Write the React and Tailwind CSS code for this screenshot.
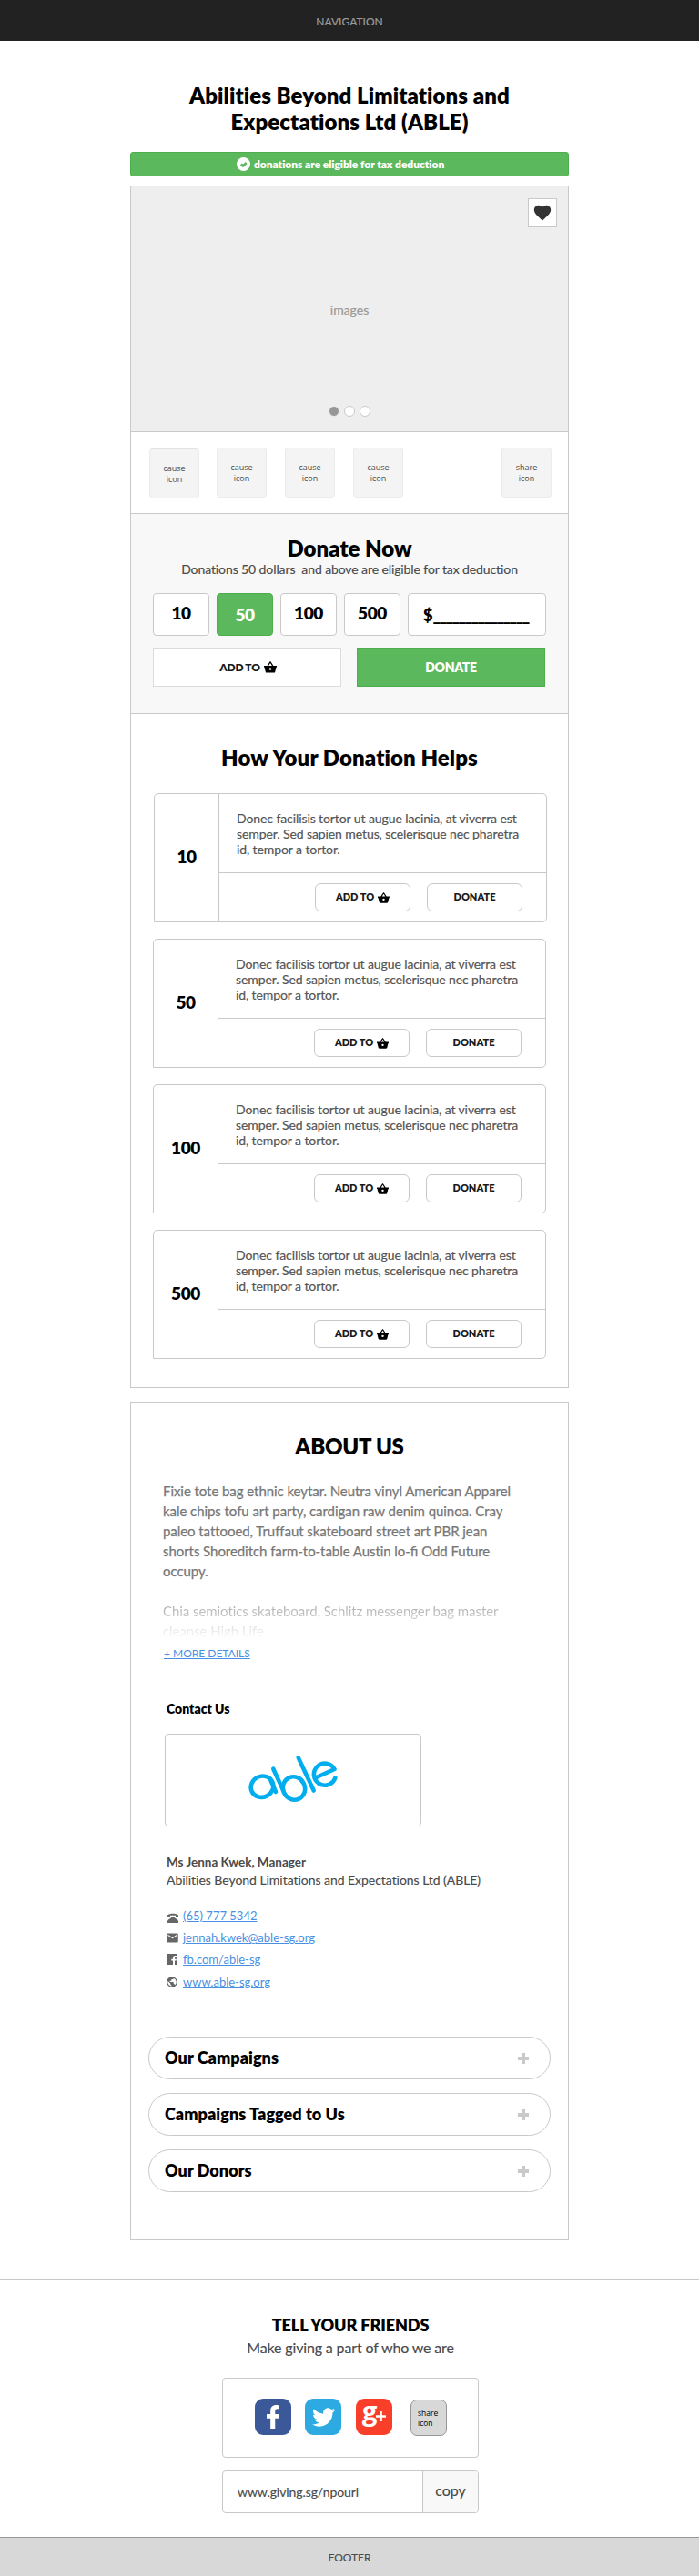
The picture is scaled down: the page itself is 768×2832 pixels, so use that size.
import React from "react";
import { MdEmail, MdPublic, MdFavorite } from "react-icons/md";
import { FaTwitter, FaFacebookF } from "react-icons/fa";

const LOREM = ["Donec facilisis tortor ut augue lacinia, at viverra est", "semper. Sed sapien metus, scelerisque nec pharetra", "id, tempor a tortor."];

function Basket({ className }) {
  return (
    <svg viewBox="0 0 14 13" className={className} fill="currentColor">
      <path fillRule="evenodd" d="M0 5h3.6L6.4.6c.3-.5.9-.5 1.2 0L10.400 5H14v1.600h-.5L12.200 11.700c-.1.600-.500.900-1.100.900H2.900c-.6 0-1-.300-1.100-.900L.5 6.600H0zM5.100 5h3.800L7 2zM7 7.200a1.300 1.300 0 1 0 0 2.600 1.300 1.300 0 0 0 0-2.600z" />
    </svg>
  );
}

function CauseIcon({ label, className }) {
  return (
    <div className={"h-[55px] w-[55px] rounded-[4px] border border-[#ececec] border-t-[#e2e2e2] bg-[#f4f4f4] pt-[15px] text-center font-['Open_Sans',sans-serif] text-[9px] leading-[12px] text-[#4a4a4a] " + className}>
      {label}
      <br />
      icon
    </div>
  );
}

function HelpCard({ amount, className }) {
  return (
    <div className={"flex h-[142px] w-[432px] rounded-[5px] rounded-bl-none border border-[#c9c9c9] " + className}>
      <div className="w-[71px] border-r border-[#c9c9c9] pt-[57px] text-center text-[19px] leading-[24px] font-extrabold tracking-[-0.4px] text-black">{amount}</div>
      <div className="flex-1">
        <div className="h-[87px] border-b border-[#c9c9c9] pt-[18px] pl-[19px] text-[14px] leading-[17px] tracking-[-0.09px] whitespace-nowrap text-[#555] [-webkit-text-stroke:0.2px]">
          {LOREM.map((l) => (
            <div key={l}>{l}</div>
          ))}
        </div>
        <div className="mt-[11px] flex justify-end gap-[18px] pr-[26px]">
          <div className="flex h-[31px] w-[105px] items-center justify-center gap-1 rounded-[6px] border border-[#c9c9c9] text-[11px] font-extrabold text-[#1a1a1a]">
            ADD TO <Basket className="h-[12px] w-[13px] text-black" />
          </div>
          <div className="flex h-[31px] w-[105px] items-center justify-center rounded-[6px] border border-[#c9c9c9] text-[11px] font-extrabold text-[#1a1a1a]">DONATE</div>
        </div>
      </div>
    </div>
  );
}

export default function App() {
  return (
    <div className="flex h-[2832px] w-[768px] flex-col bg-white font-['Lato',sans-serif] text-black [font-variant-ligatures:none]">
      <nav className="flex h-[45px] items-center justify-center bg-[#222] pt-[3px] text-[12px] text-[#9b9b9b] [-webkit-text-stroke:0.2px]">NAVIGATION</nav>
      <main className="mx-auto w-[482px]">
        <h1 className="h-[122px] pt-[45px] text-center text-[24px] leading-[29px] font-extrabold tracking-[0.08px] whitespace-nowrap">
          Abilities Beyond Limitations and
          <br />
          Expectations Ltd (ABLE)
        </h1>
        <div className="flex h-[27px] items-center rounded-[3px] border border-[#4cae4c] bg-[#5cb85c] pl-[116px] text-[12px] font-extrabold tracking-[-0.05px] text-white">
          <svg viewBox="0 0 15 15" className="mr-[4px] size-[15px]">
            <circle cx="7.500" cy="7.500" r="7.500" fill="#fff" />
            <path d="M4.800 7.500L7 9.500L10.700 6" fill="none" stroke="#5cb85c" strokeWidth="2.600" />
          </svg>
          donations are eligible for tax deduction
        </div>

        <section className="mt-[10px] border border-[#c9c9c9]">
          <div className="relative h-[269px] bg-[#eee] pt-[127px] text-center text-[14px] leading-[17px] text-[#999]">
            <span className="[-webkit-text-stroke:0.2px]">images</span>
            <div className="absolute top-[13px] right-[12px] flex size-[32px] items-center justify-center border border-[#c9c9c9] bg-white">
              <MdFavorite className="size-[22px] text-[#333]" />
            </div>
            <div className="absolute inset-x-0 bottom-[16px] flex items-center justify-center gap-[5px]">
              <span className="size-[12px] rounded-full border border-[#eee] bg-[#979797]" />
              <span className="size-[12px] rounded-full border border-[#c9c9c9] bg-white" />
              <span className="size-[12px] rounded-full border border-[#c9c9c9] bg-white" />
            </div>
          </div>
          <div className="flex h-[90px] border-t border-[#c9c9c9] pt-[17px] pr-[18px] pl-[20px]">
            <CauseIcon label="cause" className="mt-px" />
            <CauseIcon label="cause" className="ml-[19px]" />
            <CauseIcon label="cause" className="ml-[20px]" />
            <CauseIcon label="cause" className="ml-[20px]" />
            <CauseIcon label="share" className="ml-auto" />
          </div>
          <div className="h-[221px] border-y border-[#c9c9c9] bg-[#f8f8f8] px-[24px]">
            <h2 className="pt-[23px] text-center text-[24px] leading-[29px] font-extrabold">Donate Now</h2>
            <p className="text-center text-[14px] leading-[17px] tracking-[-0.1px] whitespace-pre text-[#4a4a4a] [-webkit-text-stroke:0.15px]">Donations 50 dollars  and above are eligible for tax deduction</p>
            <div className="mt-[18px] flex gap-[8px] text-center text-[19px] leading-[24px] font-extrabold tracking-[-0.4px]">
              <div className="h-[47px] w-[62px] rounded-[4px] border border-[#c9c9c9] bg-white pt-[9px]">10</div>
              <div className="h-[47px] w-[62px] rounded-[4px] border border-[#4cae4c] bg-[#5cb85c] pt-[11px] text-white">50</div>
              <div className="h-[47px] w-[62px] rounded-[4px] border border-[#c9c9c9] bg-white pt-[9px]">100</div>
              <div className="h-[47px] w-[62px] rounded-[4px] border border-[#c9c9c9] bg-white pt-[9px]">500</div>
              <div className="h-[47px] w-[152px] rounded-[4px] border border-[#c9c9c9] bg-white pt-[11px] pl-[16px] text-left text-[18px] tracking-normal">
                $<span className="tracking-[-1.5px]">_______________</span>
              </div>
            </div>
            <div className="mt-[13px] flex gap-[17px]">
              <div className="flex h-[43px] w-[207px] items-center justify-center gap-1 border border-[#dcdcdc] bg-white pl-[2px] text-[12px] font-extrabold tracking-[-0.3px] text-[#1a1a1a]">
                ADD TO <Basket className="h-[13px] w-[14px] text-black" />
              </div>
              <div className="flex h-[43px] w-[207px] items-center justify-center border border-[#4cae4c] bg-[#5cb85c] text-[14px] font-extrabold tracking-[-0.3px] text-white">DONATE</div>
            </div>
          </div>
          <div className="h-[740px] pt-[33px] pl-[24px]">
            <h2 className="mr-[24px] text-center text-[24px] leading-[29px] font-extrabold tracking-[0.1px]">How Your Donation Helps</h2>
            <div className="mt-[25px] flex flex-col gap-[18px]">
              <HelpCard amount="10" className="ml-px" />
              <HelpCard amount="50" className="" />
              <HelpCard amount="100" className="" />
              <HelpCard amount="500" className="" />
            </div>
          </div>
        </section>

        <section className="mt-[15px] h-[922px] border border-[#c9c9c9]">
          <h2 className="pt-[33px] text-center text-[24px] leading-[29px] font-extrabold tracking-[-0.25px]">ABOUT US</h2>
          <div className="mt-[24px] h-[176px] overflow-hidden pl-[35px] text-[15px] leading-[22px] tracking-[-0.06px] whitespace-nowrap text-[#777]">
            <p className="[-webkit-text-stroke:0.25px]">
              Fixie tote bag ethnic keytar. Neutra vinyl American Apparel
              <br />
              kale chips tofu art party, cardigan raw denim quinoa. Cray
              <br />
              paleo tattooed, Truffaut skateboard street art PBR jean
              <br />
              shorts Shoreditch farm-to-table Austin lo-<span className="tracking-normal [font-variant-ligatures:normal]">fi</span> Odd Future
              <br />
              occupy.
            </p>
            <p className="mt-[22px] bg-linear-to-b from-[#b5b5b5] from-20% to-white to-95% bg-clip-text text-transparent">
              Chia semiotics skateboard, Schlitz messenger bag master
              <br />
              cleanse High Life
            </p>
          </div>
          <a className="mt-[6px] ml-[36px] block text-[12px] leading-[15px] text-[#4a90e2] underline">+ MORE DETAILS</a>
          <h3 className="mt-[45px] ml-[39px] text-[14px] leading-[17px] font-extrabold">Contact Us</h3>
          <div className="mt-[19px] ml-[37px] flex h-[102px] w-[282px] rounded-[4px] border border-[#c9c9c9] pt-[22px] pl-[91px]">
            <svg viewBox="0 0 98 53" className="h-[53px] w-[98px]" fill="none" stroke="#00aeef" strokeWidth="4.600" strokeLinecap="round" strokeLinejoin="round">
              <ellipse cx="15" cy="35.200" rx="12.500" ry="11.500" transform="rotate(-25 15 35.200)" />
              <path d="M24 27L30 41" />
              <path d="M27.300 15.700L38.500 40" />
              <ellipse cx="50" cy="37" rx="12" ry="12.800" transform="rotate(-25 50 37)" />
              <path d="M54.700 3.300L71.700 39.500" />
              <path d="M73.500 25.500L94.500 16A12 12 0 1 0 95.300 25.500" />
            </svg>
          </div>
          <div className="mt-[30px] ml-[39px] text-[14px] leading-[19px] tracking-[-0.04px] whitespace-nowrap text-[#4a4a4a]">
            <p className="text-[13.5px] font-bold tracking-normal">Ms Jenna Kwek, Manager</p>
            <p className="[-webkit-text-stroke:0.15px]">Abilities Beyond Limitations and Expectations Ltd (ABLE)</p>
          </div>
          <div className="mt-[18px] ml-[39px] flex flex-col text-[13px] leading-[24px] text-[#4a90e2]">
            <div className="flex h-[24px] items-center">
              <svg viewBox="0 0 12 11" className="mt-[4px] mr-[5px] ml-px h-[11px] w-[12px]" fill="#666">
                <path d="M0 4V2.500C2 .2 10 .2 12 2.500V4H9V2.800H3V4zM4.500 4h3v1L11 7.500c.700.600 1 1.100 1 2V11H0V9.500c0-.900.300-1.400 1-2L4.500 5z" />
              </svg>
              <a className="underline">(65) 777 5342</a>
            </div>
            <div className="flex h-[24px] items-center">
              <MdEmail className="mr-[4px] -ml-px size-[15px] text-[#666]" />
              <a className="underline">jennah.kwek@able-sg.org</a>
            </div>
            <div className="flex h-[24px] items-center">
              <svg viewBox="0 0 12 12" className="mr-[6px] size-[12px]">
                <rect width="12" height="12" rx="1" fill="#666" />
                <path d="M7 12V7.500H5.300V5.800H7V4.500C7 2.900 7.800 2 9.300 2H11v1.700H9.800c-.600 0-.800.300-.800.800v1.300h1.900l-.300 1.700H9V12z" fill="#fff" />
              </svg>
              <a className="underline">fb.com/able-sg</a>
            </div>
            <div className="flex h-[26px] items-center">
              <MdPublic className="mr-[5px] -ml-px size-[14px] text-[#666]" />
              <a className="underline">www.able-sg.org</a>
            </div>
          </div>
          <div className="mt-[47px] ml-[19px] flex flex-col gap-[15px]">
            {["Our Campaigns", "Campaigns Tagged to Us", "Our Donors"].map((t) => (
              <div key={t} className="flex h-[47px] w-[442px] items-center justify-between rounded-full border border-[#c9c9c9] pr-[23px] pl-[17px] text-[18px] font-extrabold tracking-[0.05px]">
                {t}
                <svg viewBox="0 0 12 12" className="size-[12px]" fill="#c9c9c9">
                  <path d="M4 0h4v4h4v4H8v4H4V8H0V4h4z" />
                </svg>
              </div>
            ))}
          </div>
        </section>
      </main>

      <section className="mt-[43px] h-[283px] border-t border-[#c9c9c9]">
        <div className="ml-[244px] w-[282px]">
          <h2 className="pt-[37px] text-center text-[18px] leading-[24px] font-extrabold tracking-[-0.08px]">TELL YOUR FRIENDS</h2>
          <p className="mt-[2px] text-center text-[16px] leading-[22px] tracking-[-0.15px] text-[#4a4a4a] [-webkit-text-stroke:0.15px]">Make giving a part of who we are</p>
          <div className="mt-[22px] flex h-[88px] rounded-[4px] border border-[#c9c9c9] pt-[22px] pl-[35px]">
            <div className="flex size-[40px] items-center justify-center rounded-[9px] bg-[#3b5998]">
              <FaFacebookF className="size-[26px] text-white" />
            </div>
            <div className="ml-[15px] flex size-[40px] items-center justify-center rounded-[9px] bg-[#2caae1]">
              <FaTwitter className="size-[25px] text-white" />
            </div>
            <div className="ml-[16px] flex size-[40px] rounded-[9px] bg-[#f93f2a] pl-[7px] font-['Open_Sans',sans-serif] font-bold text-white">
              <span className="w-[15px] text-[29px] leading-[26px]">g</span>
              <svg viewBox="0 0 11 11" className="mt-[14px] size-[11px]" fill="#fff">
                <path d="M4.200 0h2.600v4.200H11v2.600H6.800V11H4.200V6.800H0V4.200h4.200z" />
              </svg>
            </div>
            <div className="mt-px ml-[20px] size-[40px] rounded-[7px] border border-[#979797] bg-[#d8d8d8] pt-[8px] pl-[7px] font-['Open_Sans',sans-serif] text-[8.500px] leading-[11px] text-black">
              share
              <br />
              icon
            </div>
          </div>
          <div className="mt-[14px] flex h-[47px] overflow-hidden rounded-[4px] border border-[#c9c9c9] text-[#4a4a4a]">
            <div className="flex-1 pt-[13px] pl-[16px] text-[14px] leading-[19px] tracking-[-0.08px] [-webkit-text-stroke:0.15px]">www.giving.sg/npourl</div>
            <div className="w-[61px] border-l border-[#c9c9c9] bg-[#f8f8f8] pt-[11px] text-center text-[16px] leading-[20px] [-webkit-text-stroke:0.15px]">copy</div>
          </div>
        </div>
      </section>
      <footer className="flex h-[43px] items-center justify-center border-t border-[#979797] bg-[#d8d8d8] pt-px text-[12px] text-[#4a4a4a] [-webkit-text-stroke:0.15px]">FOOTER</footer>
    </div>
  );
}
